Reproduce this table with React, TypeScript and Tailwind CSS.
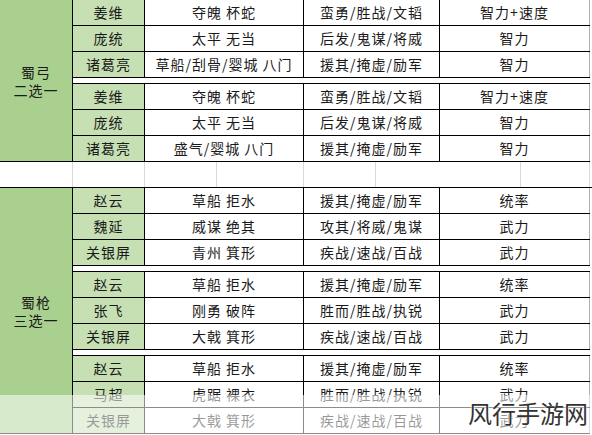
type Row = [string, string, string, string];

const shuGong: Row[][] = [
  [
    ["姜维", "夺魄 杯蛇", "蛮勇/胜战/文韬", "智力+速度"],
    ["庞统", "太平 无当", "后发/鬼谋/将威", "智力"],
    ["诸葛亮", "草船/刮骨/婴城 八门", "援其/掩虚/励军", "智力"],
  ],
  [
    ["姜维", "夺魄 杯蛇", "蛮勇/胜战/文韬", "智力+速度"],
    ["庞统", "太平 无当", "后发/鬼谋/将威", "智力"],
    ["诸葛亮", "盛气/婴城 八门", "援其/掩虚/励军", "智力"],
  ],
];

const shuQiang: Row[][] = [
  [
    ["赵云", "草船 拒水", "援其/掩虚/励军", "统率"],
    ["魏延", "威谋 绝其", "攻其/将威/鬼谋", "武力"],
    ["关银屏", "青州 箕形", "疾战/速战/百战", "武力"],
  ],
  [
    ["赵云", "草船 拒水", "援其/掩虚/励军", "统率"],
    ["张飞", "刚勇 破阵", "胜而/胜战/执锐", "武力"],
    ["关银屏", "大戟 箕形", "疾战/速战/百战", "武力"],
  ],
  [
    ["赵云", "草船 拒水", "援其/掩虚/励军", "统率"],
    ["马超", "虎踞 裸衣", "胜而/胜战/执锐", "武力"],
    ["关银屏", "大戟 箕形", "疾战/速战/百战", "武力"],
  ],
];

const TableRow = ({ row }: { row: Row }) => (
  <div className="flex h-[26px] border-b border-black">
    <div className="flex w-[72px] items-center justify-center border-r border-black bg-[#c6e0b4]">
      {row[0]}
    </div>
    <div className="flex w-[159px] items-center justify-center border-r border-black bg-white whitespace-pre">
      {row[1]}
    </div>
    <div className="flex w-[136px] items-center justify-center border-r border-black bg-white">
      {row[2]}
    </div>
    <div className="flex w-[150px] items-center justify-center border-r border-[#b0b0b0] bg-white">
      {row[3]}
    </div>
  </div>
);

const Section = ({ label, groups }: { label: string; groups: Row[][] }) => (
  <div className="flex">
    {/* merged group cell */}
    <div className="flex w-[73px] items-center justify-center border-r border-b border-black bg-[#a9d08e]">
      <p className="text-center leading-[18px] whitespace-pre-line">{label}</p>
    </div>
    <div className="flex flex-col">
      {groups.map((g, gi) => (
        <div key={gi} className="flex flex-col">
          {gi > 0 && <div className="h-[6px] border-b border-black bg-white" />}
          {g.map((r, ri) => (
            <TableRow key={ri} row={r} />
          ))}
        </div>
      ))}
    </div>
  </div>
);

export default function App() {
  return (
    <div
      className="relative h-[435px] w-[592px] overflow-hidden bg-white text-[14px] tracking-[1px] text-[#1a1a1a]"
      style={{ fontFamily: '"Noto Sans CJK SC", "Noto Sans", sans-serif' }}
    >
      <Section label={"蜀弓\n二选一"} groups={shuGong} />

      {/* blank spacer row with faint grid */}
      <div className="flex h-[26px] border-b border-black">
        <div className="w-[73px] border-r border-[#d8d8d8]" />
        <div className="w-[72px] border-r border-[#d8d8d8]" />
        <div className="w-[72px] border-r border-[#d8d8d8]" />
        <div className="w-[87px] border-r border-[#d8d8d8]" />
        <div className="w-[72px] border-r border-[#d8d8d8]" />
        <div className="w-[145px] border-r border-[#d8d8d8]" />
        <div className="w-[69px] border-r border-[#d8d8d8]" />
      </div>

      <Section label={"蜀枪\n三选一"} groups={shuQiang} />

      {/* faded bottom band */}
      <div className="absolute inset-x-0 top-[395px] bottom-0 bg-white/55" />

      {/* watermark */}
      <div
        className="absolute top-[399px] left-[468px] text-[24px] leading-[28px] tracking-[0px] text-[#333]"
        style={{ textShadow: "0 0 2px #fff, 0 0 2px #fff" }}
      >
        风行手游网
      </div>
    </div>
  );
}
